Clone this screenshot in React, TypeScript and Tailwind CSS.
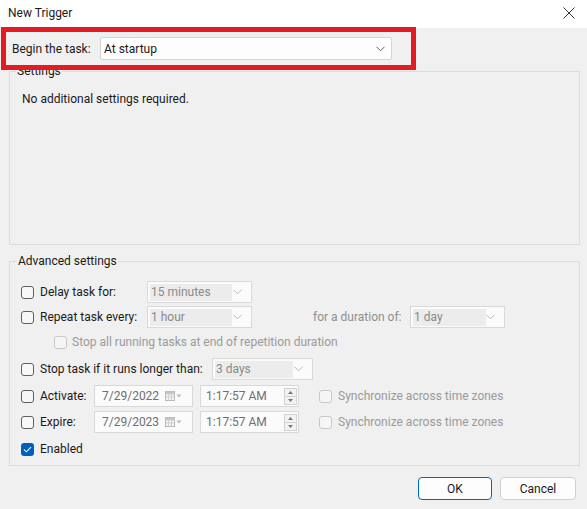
import React from "react";

const Chevron = ({ color = "#5f5f5f" }: { color?: string }) => (
  <svg width="9" height="6" viewBox="0 0 9 6" fill="none">
    <path d="M0.5 0.8 L4.5 4.8 L8.5 0.8" stroke={color} strokeWidth="1" />
  </svg>
);

const Checkbox = ({ checked = false, disabled = false }: { checked?: boolean; disabled?: boolean }) =>
  checked ? (
    <div className="w-[13px] h-[13px] rounded-[3px] bg-[#005fb8] flex items-center justify-center shrink-0">
      <svg width="9" height="7" viewBox="0 0 9 7" fill="none">
        <path d="M1 3.6 L3.4 5.8 L8 1.2" stroke="#ffffff" strokeWidth="1.1" />
      </svg>
    </div>
  ) : (
    <div
      className={
        disabled
          ? "w-[13px] h-[13px] rounded-[3px] border border-[#c8c8c8] bg-[#f5f5f5] shrink-0"
          : "w-[13px] h-[13px] rounded-[3px] border border-[#5f5f5f] bg-[#f7f7f7] shrink-0"
      }
    />
  );

const DisabledSelect = ({ value, width, inner }: { value: string; width: string; inner: string }) => (
  <div className={`${width} h-[22px] border border-[#d9d9d9] bg-[#fbfbfb] flex items-center pl-[2px] pr-[9px] shrink-0`}>
    <div className={`${inner} h-[17px] bg-[#ececec] text-[#8a8a8a] flex items-center pl-[1px] leading-[16px] whitespace-nowrap`}>{value}</div>
    <div className="flex-1" />
    <Chevron color="#b9b9b9" />
  </div>
);

const CalendarIcon = () => (
  <svg width="17" height="10" viewBox="0 0 17 10" fill="none">
    <rect x="0.5" y="0.5" width="9" height="9" fill="#f4f4f4" stroke="#b8b8b8" />
    <path d="M0.5 3 H9.5 M3.5 3 V9.5 M6.5 3 V9.5 M0.5 6 H9.5" stroke="#cfcfcf" />
    <rect x="0.5" y="0.5" width="9" height="2.3" fill="#c4c4c4" />
    <path d="M11.5 3.5 L16.5 3.5 L14 6.5 Z" fill="#b9b9b9" />
  </svg>
);

const DateBox = ({ value }: { value: string }) => (
  <div className="w-[99px] h-[22px] border border-[#d9d9d9] bg-[#fbfbfb] flex items-center pl-[7px] pr-[10px] shrink-0">
    <span className="text-[#6f6f6f] leading-[16px]">{value}</span>
    <div className="flex-1" />
    <CalendarIcon />
  </div>
);

const Spinner = () => (
  <div className="w-[13px] h-[17px] flex flex-col border border-[#d2d2d2] bg-[#f2f2f2]">
    <div className="flex-1 flex items-center justify-center border-b border-[#d2d2d2]">
      <svg width="5" height="3" viewBox="0 0 5 3">
        <path d="M0 3 L2.5 0 L5 3 Z" fill="#777777" />
      </svg>
    </div>
    <div className="flex-1 flex items-center justify-center">
      <svg width="5" height="3" viewBox="0 0 5 3">
        <path d="M0 0 L2.5 3 L5 0 Z" fill="#777777" />
      </svg>
    </div>
  </div>
);

const TimeBox = ({ value }: { value: string }) => (
  <div className="w-[99px] h-[22px] border border-[#d9d9d9] bg-[#fbfbfb] flex items-center pl-[5px] pr-[1px] shrink-0">
    <span className="text-[#6f6f6f] leading-[16px]">{value}</span>
    <div className="flex-1" />
    <Spinner />
  </div>
);

export default function App() {
  return (
    <div className="relative w-[587px] h-[509px] bg-[#f0f0f0] overflow-hidden font-['Segoe_UI','Roboto',sans-serif] text-[12px] text-[#1a1a1a] leading-[16px] whitespace-nowrap">
      {/* Title bar */}
      <div className="h-[28px] bg-white flex items-center justify-between pl-[8px] pr-[12px]">
        <span className="text-[#1a1a1a] -mt-[2px]">New Trigger</span>
        <svg width="12" height="12" viewBox="0 0 12 12" fill="none" className="-mt-[2px]">
          <path d="M0.5 0.5 L11.5 11.5 M11.5 0.5 L0.5 11.5" stroke="#333333" strokeWidth="1" />
        </svg>
      </div>

      {/* Begin the task row */}
      <div className="flex items-center mt-[9px] mb-[3px] h-[23px] pl-[12px]">
        <span className="w-[88px] shrink-0 mt-[1px]">Begin the task:</span>
        <div className="w-[292px] h-[23px] border border-[#d5d5d5] rounded-[2px] bg-[#fdfdfd] flex items-center pl-[3px] pr-[6px]">
          <span className="flex-1">At startup</span>
          <Chevron />
        </div>
      </div>

      {/* Settings group */}
      <fieldset className="ml-[9px] w-[571px] h-[182px] border border-[#dcdcdc]">
        <legend className="ml-[6px] px-[1px] leading-[16px]">Settings</legend>
        <div className="pl-[12px] pt-[12px]">No additional settings required.</div>
      </fieldset>

      {/* Advanced settings group */}
      <fieldset className="ml-[9px] mt-[8px] w-[571px] h-[213px] border border-[#dcdcdc]">
        <legend className="ml-[7px] px-[1px] leading-[16px]">Advanced settings</legend>

        <div className="flex items-center h-[22px] mt-[12px] pl-[11px]">
          <Checkbox />
          <span className="ml-[6px] w-[107px] shrink-0">Delay task for:</span>
          <DisabledSelect value="15 minutes" width="w-[105px]" inner="w-[82px]" />
        </div>

        <div className="flex items-center h-[22px] mt-[3px] pl-[11px]">
          <Checkbox />
          <span className="ml-[6px] w-[107px] shrink-0">Repeat task every:</span>
          <DisabledSelect value="1 hour" width="w-[105px]" inner="w-[82px]" />
          <span className="ml-[61px] w-[97px] shrink-0 text-[#8f8f8f]">for a duration of:</span>
          <DisabledSelect value="1 day" width="w-[95px]" inner="w-[73px]" />
        </div>

        <div className="flex items-center h-[16px] mt-[6px] pl-[44px]">
          <Checkbox disabled />
          <span className="ml-[5px] text-[#9a9a9a]">Stop all running tasks at end of repetition duration</span>
        </div>

        <div className="flex items-center h-[22px] mt-[8px] pl-[11px]">
          <Checkbox />
          <span className="ml-[6px] w-[172px] shrink-0">Stop task if it runs longer than:</span>
          <DisabledSelect value="3 days" width="w-[101px]" inner="w-[78px]" />
        </div>

        <div className="flex items-center h-[22px] mt-[5px] pl-[11px]">
          <Checkbox />
          <span className="ml-[6px] w-[54px] shrink-0">Activate:</span>
          <DateBox value="7/29/2022" />
          <div className="ml-[7px]">
            <TimeBox value="1:17:57 AM" />
          </div>
          <div className="ml-[20px]">
            <Checkbox disabled />
          </div>
          <span className="ml-[6px] text-[#9a9a9a]">Synchronize across time zones</span>
        </div>

        <div className="flex items-center h-[22px] mt-[4px] pl-[11px]">
          <Checkbox />
          <span className="ml-[6px] w-[54px] shrink-0">Expire:</span>
          <DateBox value="7/29/2023" />
          <div className="ml-[7px]">
            <TimeBox value="1:17:57 AM" />
          </div>
          <div className="ml-[20px]">
            <Checkbox disabled />
          </div>
          <span className="ml-[6px] text-[#9a9a9a]">Synchronize across time zones</span>
        </div>

        <div className="flex items-center h-[16px] mt-[8px] pl-[11px]">
          <Checkbox checked />
          <span className="ml-[6px]">Enabled</span>
        </div>
      </fieldset>

      {/* Buttons */}
      <div className="flex justify-end gap-[8px] mt-[11px] pr-[11px]">
        <button className="w-[74px] h-[23px] rounded-[4px] border border-[#0067c0] bg-[#fdfdfd] text-[#1a1a1a] leading-[16px]">OK</button>
        <button className="w-[76px] h-[23px] rounded-[4px] border border-[#d0d0d0] bg-[#fdfdfd] text-[#1a1a1a] leading-[16px]">Cancel</button>
      </div>

      {/* Red annotation rectangle */}
      <div className="absolute left-[1px] top-[27px] w-[415px] h-[43px] border-[5px] border-[#e31b23] pointer-events-none" />
    </div>
  );
}
